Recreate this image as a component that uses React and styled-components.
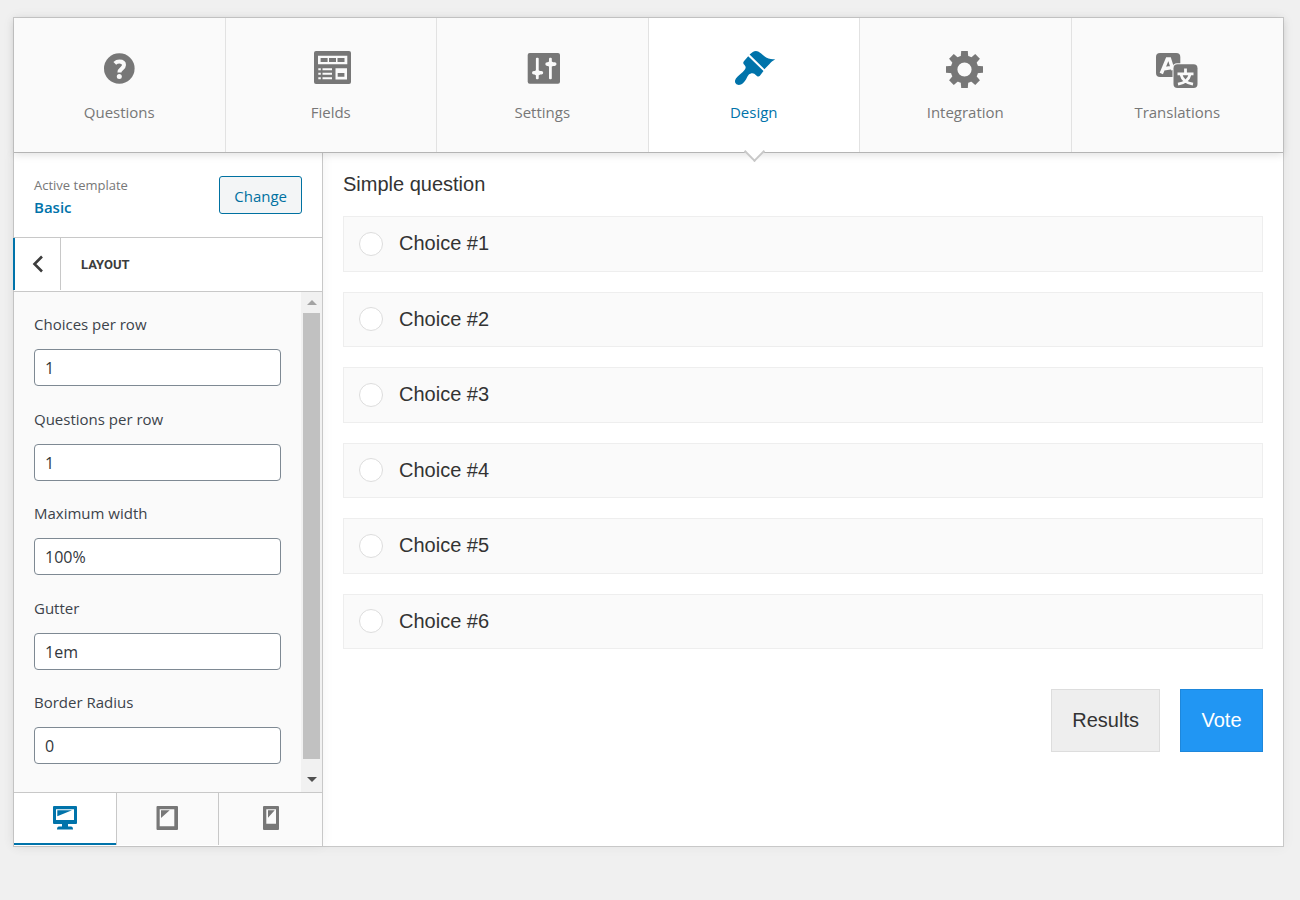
import React, { useState } from "react";
import styled, { createGlobalStyle } from "styled-components";

const GlobalStyle = createGlobalStyle`
  * {
    box-sizing: border-box;
  }

  body {
    margin: 0;
    background-color: #f0f0f0;
    color: #3c434a;
    font-family: "Open Sans", "Noto Sans", sans-serif;
    font-size: 15px;
    line-height: 24px;
  }

  button,
  input {
    margin: 0;
    font-family: inherit;
    font-size: inherit;
    line-height: inherit;
  }
`;

const Editor = styled.div`
  margin: 17px 16px 20px 13px;
  border: 1px solid #c8c8c8;
  background-color: white;
  box-shadow: 0 0 12px rgba(0, 0, 0, 0.05);
`;

const Tabs = styled.nav`
  position: relative;
  display: grid;
  grid-template-columns: repeat(6, 1fr);
  border-bottom: 1px solid #b4b4b4;
  box-shadow: 0 2px 8px rgba(0, 0, 0, 0.12);
`;

const Tab = styled.a`
  position: relative;
  display: flex;
  flex-direction: column;
  align-items: center;
  gap: 10px;
  padding: 28px 0;
  border-right: 1px solid #e2e2e2;
  background-color: ${(props) => (props.$active ? "white" : "#fafafa")};
  color: ${(props) => (props.$active ? "#0073aa" : "#777777")};
  text-decoration: none;

  &:last-child {
    border-right: none;
  }

  &::after {
    content: "";
    display: ${(props) => (props.$active ? "block" : "none")};
    position: absolute;
    bottom: -7px;
    left: calc(50% - 7px);
    width: 13px;
    height: 13px;
    border: solid #c8c8c8;
    border-width: 0 2px 2px 0;
    background-color: white;
    transform: rotate(45deg);
  }
`;

const Main = styled.div`
  display: flex;
`;

const Sidebar = styled.aside`
  display: flex;
  flex-direction: column;
  flex: 0 0 309px;
  border-right: 1px solid #c8c8c8;
  box-shadow: 0 0 12px rgba(0, 0, 0, 0.05);
`;

const ActiveTemplate = styled.div`
  display: flex;
  align-items: center;
  justify-content: space-between;
  height: 85px;
  padding: 0 20px;
  border-bottom: 1px solid #c8c8c8;
`;

const TemplateInfo = styled.div`
  padding-top: 1px;
`;

const TemplateCaption = styled.div`
  color: #777777;
  font-size: 13px;
  line-height: 22px;
`;

const TemplateName = styled.div`
  color: #0073aa;
  font-size: 15px;
  font-weight: 600;
  line-height: 22px;
`;

const ChangeButton = styled.button`
  height: 38px;
  padding: 2px 14px 0;
  border: 1px solid #0071a1;
  border-radius: 3px;
  background-color: #f3f5f6;
  color: #0071a1;
`;

const SectionHeader = styled.div`
  display: flex;
  height: 54px;
  padding-bottom: 1px;
  border-bottom: 1px solid #c8c8c8;
`;

const BackButton = styled.button`
  display: flex;
  align-items: center;
  justify-content: center;
  width: 48px;
  margin-left: -1px;
  padding: 0;
  border: none;
  border-left: 2px solid #0073aa;
  border-right: 1px solid #c8c8c8;
  background-color: white;
  color: #3c3c3c;
`;

const SectionTitle = styled.h3`
  margin: 0;
  padding: 0 20px;
  color: #3c3c3c;
  font-family: Roboto, "Open Sans", sans-serif;
  font-size: 13px;
  font-weight: 700;
  line-height: 53px;
  text-transform: uppercase;
`;

const ScrollArea = styled.div`
  display: flex;
  height: 500px;
  background-color: #fafafa;
`;

const Fields = styled.div`
  display: flex;
  flex: 1;
  flex-direction: column;
  justify-content: space-between;
  padding: 20px 20px 28px;
`;

const Field = styled.div`
  display: flex;
  flex-direction: column;
  gap: 13px;
`;

const FieldInput = styled.input`
  width: 100%;
  height: 37px;
  padding: 1px 10px 0;
  border: 1px solid #7e8993;
  border-radius: 4px;
  background-color: white;
  color: #32373c;
  font-size: 16px;
`;

const ScrollBar = styled.div`
  display: flex;
  flex-direction: column;
  align-items: center;
  flex: 0 0 21px;
  background-color: #f1f1f1;
`;

const ScrollArrow = styled.span`
  display: flex;
  align-items: center;
  justify-content: center;
  height: ${(props) => (props.$down ? "25px" : "21px")};
  flex: none;

  &::before {
    content: "";
    border: solid transparent;
    border-width: ${(props) => (props.$down ? "5px 5px 0" : "0 5px 5px")};
    border-top-color: ${(props) => (props.$down ? "#505050" : "transparent")};
    border-bottom-color: ${(props) => (props.$down ? "transparent" : "#a3a3a3")};
  }
`;

const ScrollThumb = styled.span`
  width: 17px;
  height: 446px;
  margin-bottom: 8px;
  background-color: #c1c1c1;
`;

const Devices = styled.div`
  display: grid;
  grid-template-columns: repeat(3, 1fr);
  height: 54px;
  padding-bottom: 1px;
  border-top: 1px solid #c8c8c8;
`;

const Device = styled.button`
  display: flex;
  align-items: center;
  justify-content: center;
  padding: 0 0 2px;
  border: none;
  border-right: 1px solid #c8c8c8;
  background-color: ${(props) => (props.$active ? "white" : "#fafafa")};
  box-shadow: ${(props) => (props.$active ? "inset 0 -2px #0073aa" : "none")};
  color: ${(props) => (props.$active ? "#0073aa" : "#777777")};

  &:last-child {
    border-right: none;
  }
`;

const Preview = styled.form`
  flex: 1;
  min-width: 0;
  padding: 20px;
  color: #333333;
  font-family: "Liberation Sans", Arial, sans-serif;
  font-size: 20px;
  line-height: 23px;
`;

const Question = styled.h2`
  margin: 0 0 20px;
  font-size: 20px;
  font-weight: 400;
`;

const Choices = styled.div`
  display: grid;
  grid-auto-rows: 1fr;
  gap: 20px;
  min-height: 433px;
`;

const Choice = styled.label`
  display: flex;
  align-items: center;
  gap: 16px;
  padding: 0 15px;
  border: 1px solid #eeeeee;
  background-color: #fafafa;
`;

const Radio = styled.input`
  appearance: none;
  width: 24px;
  height: 24px;
  border: 1px solid #dddddd;
  border-radius: 50%;
  background-color: white;

  &:checked {
    border: 7px solid #2196f3;
  }
`;

const Actions = styled.div`
  display: flex;
  justify-content: flex-end;
  gap: 20px;
  margin-top: 40px;
`;

const ActionButton = styled.button`
  height: 63px;
  min-width: 83px;
  padding: 0 20px;
  border: 1px solid ${(props) => (props.$primary ? "#1e87db" : "#dddddd")};
  background-color: ${(props) => (props.$primary ? "#2196f3" : "#eeeeee")};
  color: ${(props) => (props.$primary ? "white" : "#333333")};
`;

const TabIcon = ({ children }) => (
  <svg width="44" height="44" viewBox="0 0 44 44" fill="currentColor" aria-hidden="true">
    {children}
  </svg>
);

const QuestionsIcon = () => (
  <TabIcon>
    <circle cx="22.3" cy="22.5" r="15.3" />
    <path
      d="M17.8 17.4c1.3-1.2 2.9-1.8 4.6-1.8 2.9 0 4.6 1.3 4.6 3.5 0 3.6-4.6 3.4-4.6 7.4"
      fill="none"
      stroke="#fafafa"
      strokeWidth="4"
    />
    <circle cx="22.3" cy="30.4" r="2.5" fill="#fafafa" />
  </TabIcon>
);

const FieldsIcon = () => (
  <TabIcon>
    <rect x="5" y="5" width="37" height="33" rx="2" />
    <path
      fill="#fafafa"
      d="M9 9.7h29.3v8.6H9zM9.3 22.3h2.5v2H9.3zM9.3 26.8h2.5v2H9.3zM9.3 31.2h2.5v2H9.3zM13.5 22.3h9.5v2h-9.5zM13.5 26.8h9.5v2h-9.5zM13.5 31.2h9.5v2h-9.5zM26.5 22.3h11.5v11.2H26.5z"
    />
    <path d="M11.6 12h7v4h-7zM20 12h7v4h-7zM28.5 12h7v4h-7zM28.7 27h6.7v3.8h-6.7z" />
  </TabIcon>
);

const SettingsIcon = () => (
  <TabIcon>
    <rect x="7.7" y="7" width="32.3" height="30.7" rx="2" />
    <g fill="#fafafa">
      <rect x="15.9" y="11.7" width="2.8" height="21.6" rx="1" />
      <rect x="12" y="25" width="11.2" height="3.6" rx="1.8" />
      <rect x="14.6" y="24.3" width="5.4" height="5" rx="1.5" />
      <rect x="29" y="11.7" width="2.8" height="21.6" rx="1" />
      <rect x="25.3" y="16.3" width="11.2" height="3.6" rx="1.8" />
      <rect x="27.7" y="15.5" width="5.4" height="5" rx="1.5" />
    </g>
  </TabIcon>
);

const DesignIcon = () => (
  <TabIcon>
    <path d="M17.6 8.4l3.2-2.5q2.700-1.500 5.400-.4c3.600 1.900 6.300 5.600 10.300 7.100 2.200.8 4.500.8 6.700.6-2.500 1.500-4.400 3-5.700 4.700L32.400 23.200z" />
    <path d="M16.200 10.200L31.500 25.100l-3.600 4.600q-1.400 1.500-3 .2l-2.600-2.200c-1.700-1.100-4.100-.4-5.400.8-1.200 1.100-1.600 2.900-2.800 4.700-1.500 2.300-3.300 4.500-5.100 5.300-3.300 1.500-6.600-.7-5.900-4.200.6-2.700 3.600-4.700 6.200-7.100 2.100-1.900 3.900-3.600 4.300-5.300.3-1.200-.5-2.200-1.300-3.100-1.100-1.200-1.500-2.300-.4-3.600z" />
  </TabIcon>
);

const IntegrationIcon = () => (
  <TabIcon>
    <circle cx="21.5" cy="23.5" r="10.5" fill="none" stroke="currentColor" strokeWidth="6.8" />
    {[0, 45, 90, 135, 180, 225, 270, 315].map((angle) => (
      <path key={angle} d="M18.2 5h6.6l.5 6.5h-7.6z" transform={`rotate(${angle} 21.5 23.5)`} />
    ))}
  </TabIcon>
);

const TranslationsIcon = () => (
  <TabIcon>
    <rect x="1" y="7" width="24.3" height="24" rx="4" />
    <path d="M6.3 27.5L12.3 13h2.200L18 24M9 22.800l8-1.300" fill="none" stroke="#fafafa" strokeWidth="3.500" />
    <rect x="17.5" y="17.2" width="26" height="26" rx="4.5" fill="#fafafa" />
    <rect x="18.5" y="18.2" width="24" height="23.8" rx="4" />
    <path
      d="M30.5 22.5v4.5M22.500 27.8h16M26 28.500c1 4.500 5.500 8.500 12 9.700M35 28.500c-1 4.500-5.500 8.500-12 9.700"
      fill="none"
      stroke="#fafafa"
      strokeWidth="2.8"
    />
  </TabIcon>
);

const DeviceIcon = ({ d }) => (
  <svg width="26" height="26" viewBox="0 0 26 26" fill="currentColor" fillRule="evenodd" aria-hidden="true">
    <path d={d} />
  </svg>
);

const tabs = [
  { name: "Questions", icon: <QuestionsIcon /> },
  { name: "Fields", icon: <FieldsIcon /> },
  { name: "Settings", icon: <SettingsIcon /> },
  { name: "Design", icon: <DesignIcon /> },
  { name: "Integration", icon: <IntegrationIcon /> },
  { name: "Translations", icon: <TranslationsIcon /> },
];

const fields = [
  { id: "choices-per-row", label: "Choices per row", value: "1" },
  { id: "questions-per-row", label: "Questions per row", value: "1" },
  { id: "maximum-width", label: "Maximum width", value: "100%" },
  { id: "gutter", label: "Gutter", value: "1em" },
  { id: "border-radius", label: "Border Radius", value: "0" },
];

const devices = [
  {
    name: "Desktop",
    d: "M2 1h22q1 0 1 1v16q0 1-1 1h-8v2.5h3q2 0 2 3H5q0-3 2-3h3V19H2q-1 0-1-1V2q0-1 1-1zM4 4.3v10.7h18V4.3zM5.3 5.3H20L5.3 11.3z",
  },
  {
    name: "Tablet",
    d: "M3.5 1h19.5q1 0 1 1v22q0 1-1 1H3.5q-1 0-1-1V2q0-1 1-1zM5.7 4.3v17h14.6v-17zM7 5.3h8.7L7 13z",
  },
  {
    name: "Phone",
    d: "M6 1h14q1 0 1 1v22q0 1-1 1H6q-1 0-1-1V2q0-1 1-1zM8.3 4.3v14.4H18V4.3zM10 5.3h6.7L10 12.7z",
  },
];

const choices = [1, 2, 3, 4, 5, 6];

const App = () => {
  const [activeTab, setActiveTab] = useState("Design");
  const [device, setDevice] = useState("Desktop");

  return (
    <>
      <GlobalStyle />
      <Editor>
        <Tabs>
          {tabs.map((tab) => (
            <Tab
              key={tab.name}
              href={`#${tab.name.toLowerCase()}`}
              $active={tab.name === activeTab}
              onClick={() => setActiveTab(tab.name)}
            >
              {tab.icon}
              <span>{tab.name}</span>
            </Tab>
          ))}
        </Tabs>
        <Main>
          <Sidebar>
            <ActiveTemplate>
              <TemplateInfo>
                <TemplateCaption>Active template</TemplateCaption>
                <TemplateName>Basic</TemplateName>
              </TemplateInfo>
              <ChangeButton type="button">Change</ChangeButton>
            </ActiveTemplate>
            <SectionHeader>
              <BackButton type="button" aria-label="Back">
                <svg width="14" height="18" viewBox="0 0 14 18" fill="none" stroke="currentColor" strokeWidth="2.6">
                  <path d="M11 1.5L3.5 9l7.5 7.5" />
                </svg>
              </BackButton>
              <SectionTitle>Layout</SectionTitle>
            </SectionHeader>
            <ScrollArea>
              <Fields>
                {fields.map((field) => (
                  <Field key={field.id}>
                    <label htmlFor={field.id}>{field.label}</label>
                    <FieldInput id={field.id} type="text" defaultValue={field.value} />
                  </Field>
                ))}
              </Fields>
              <ScrollBar aria-hidden="true">
                <ScrollArrow />
                <ScrollThumb />
                <ScrollArrow $down />
              </ScrollBar>
            </ScrollArea>
            <Devices>
              {devices.map((item) => (
                <Device
                  key={item.name}
                  type="button"
                  aria-label={item.name}
                  $active={item.name === device}
                  onClick={() => setDevice(item.name)}
                >
                  <DeviceIcon d={item.d} />
                </Device>
              ))}
            </Devices>
          </Sidebar>
          <Preview onSubmit={(e) => e.preventDefault()}>
            <Question>Simple question</Question>
            <Choices>
              {choices.map((number) => (
                <Choice key={number}>
                  <Radio type="radio" name="choice" value={number} />
                  <span>Choice #{number}</span>
                </Choice>
              ))}
            </Choices>
            <Actions>
              <ActionButton type="button">Results</ActionButton>
              <ActionButton type="submit" $primary>
                Vote
              </ActionButton>
            </Actions>
          </Preview>
        </Main>
      </Editor>
    </>
  );
};

export default App;
